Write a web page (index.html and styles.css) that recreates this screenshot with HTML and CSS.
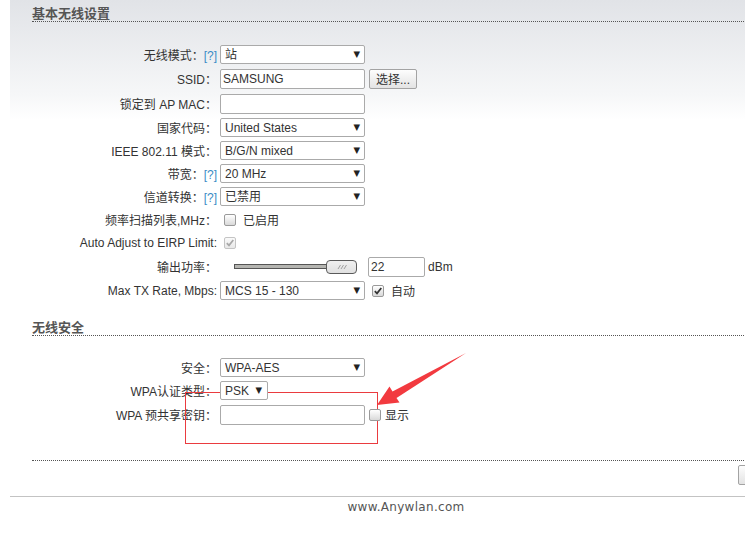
FILE: index.html
```html
<!DOCTYPE html>
<html>
<head>
<meta charset="utf-8">
<title>无线设置</title>
<link rel="stylesheet" href="styles.css">
</head>
<body>
<div class="page">
  <div class="panel">
    <!-- 基本无线设置 -->
    <div class="sec-title">基本无线设置</div>
    <div class="form">
      <div class="row"><label class="lbl">无线模式：<a class="help">[?]</a></label><span class="sel"><select><option>站</option></select></span></div>
      <div class="row tall"><label class="lbl">SSID：</label><input class="txt" type="text" value="SAMSUNG"><button class="btn">选择...</button></div>
      <div class="row tall"><label class="lbl">锁定到 AP MAC：</label><input class="txt" type="text" value=""></div>
      <div class="row"><label class="lbl">国家代码：</label><span class="sel"><select><option>United States</option></select></span></div>
      <div class="row"><label class="lbl">IEEE 802.11 模式：</label><span class="sel"><select><option>B/G/N mixed</option></select></span></div>
      <div class="row"><label class="lbl">带宽：<a class="help">[?]</a></label><span class="sel"><select><option>20 MHz</option></select></span></div>
      <div class="row"><label class="lbl">信道转换：<a class="help">[?]</a></label><span class="sel"><select><option>已禁用</option></select></span></div>
      <div class="row"><label class="lbl">频率扫描列表,MHz：</label><span class="cb"></span><span class="cb-text">已启用</span></div>
      <div class="row"><label class="lbl">Auto Adjust to EIRP Limit:</label><span class="cb on dis"><svg width="10" height="10" viewBox="0 0 10 10"><path d="M1.8 5.2 L4 7.4 L8.3 2" fill="none" stroke="#a8a8a8" stroke-width="1.7"/></svg></span></div>
      <div class="row tall"><label class="lbl">输出功率：</label>
        <span class="slider"><span class="track"></span><span class="knob"><svg width="29" height="12" viewBox="0 0 29 12"><path d="M11 8 L13.5 4 M14 8 L16.5 4 M17 8 L19.5 4" stroke="#a0a0a0" stroke-width="1"/></svg></span></span>
        <input class="txt short" type="text" value="22"><span class="unit">dBm</span>
      </div>
      <div class="row"><label class="lbl">Max TX Rate, Mbps:</label><span class="sel"><select><option>MCS 15 - 130</option></select></span><span class="cb on auto"><svg width="10" height="10" viewBox="0 0 10 10"><path d="M1.8 5.2 L4 7.4 L8.3 2" fill="none" stroke="#333" stroke-width="1.7"/></svg></span><span class="cb-text">自动</span></div>
    </div>

    <!-- 无线安全 -->
    <div class="sec-title second">无线安全</div>
    <div class="form sec2">
      <div class="row"><label class="lbl">安全：</label><span class="sel"><select><option>WPA-AES</option></select></span></div>
      <div class="row"><label class="lbl">WPA认证类型：</label><span class="sel small"><select><option>PSK</option></select></span></div>
      <div class="row tall"><label class="lbl">WPA 预共享密钥：</label><input class="txt" type="text" value=""><span class="cb show"></span><span class="cb-text near">显示</span></div>
    </div>

    <div class="foot-bar"><button class="btn save"></button></div>
  </div>
  <div class="footer">www.Anywlan.com</div>

  <svg class="marks" width="745" height="552" viewBox="0 0 745 552">
    <rect x="185.5" y="392.5" width="192" height="51" fill="none" stroke="#ea3b3f" stroke-width="1"/>
    <polygon points="466,353 392.5,391.5 389.5,386.5 377,405 399.5,402.5 396.5,398" fill="#f23a3f"/>
  </svg>
</div>
</body>
</html>
```
FILE: styles.css
```css
html, body{margin:0;padding:0;background:#fff;overflow:hidden;}
.page{
	position:relative;
	width:802px;
	font:12px "Liberation Sans","Noto Sans CJK SC",sans-serif;
	color:#333;
}
.panel{
	margin-left:10px;
	padding-top:7px;
	background:#fff linear-gradient(to bottom,#e1e3e7 0,#f6f7f8 95px,#fff 120px) no-repeat;
	background-size:100% 120px;
}
.sec-title{
	margin-left:22px;
	font-size:13px;
	font-weight:bold;
	line-height:14px;
	color:#555;
	border-bottom:1px dotted #555;
}
.sec-title.second{margin-top:19px;}
.form{margin-top:21px;}
.form.sec2{margin-top:20px;}

.row{display:flex;align-items:center;height:23px;}
.row.tall{height:25px;}
.lbl{
	flex:none;
	width:207px;
	margin-right:3px;
	text-align:right;
	white-space:nowrap;
}
.help{color:#3a8cc6;}

.txt{
	box-sizing:border-box;
	width:145px;height:20px;
	margin:0;padding:0 2px;
	border:1px solid #aaa;border-radius:2px;
	background:#fff;
	font:inherit;color:#333;
	outline:none;
}
.txt.short{width:57px;margin-left:11px;}
.unit{margin-left:3px;}

.sel{position:relative;display:inline-block;z-index:2;}
.sel select{
	-webkit-appearance:none;appearance:none;
	box-sizing:border-box;
	width:145px;height:19px;
	margin:0;padding:0 4px;
	border:1px solid #aaa;border-radius:2px;
	background:#fff;
	font:inherit;color:#333;
	outline:none;
}
.sel.small select{width:48px;}
.sel::after{
	content:"▼";
	position:absolute;right:5px;top:4px;
	font:8.5px/10px "DejaVu Sans",sans-serif;color:#222;
	pointer-events:none;
}
.sel.small::after{right:6px;}

.btn{
	box-sizing:border-box;
	height:20px;margin:0 0 0 4px;padding:0 6px;
	border:1px solid #a3a3a3;border-radius:2px;
	background:linear-gradient(#fdfdfd,#e3e3e3);
	font:inherit;color:#333;
}

.cb{
	position:relative;z-index:2;
	display:inline-flex;align-items:center;justify-content:center;
	box-sizing:border-box;
	width:12px;height:12px;
	margin-left:4px;
	border:1px solid #9a9a9a;border-radius:2px;
	background:linear-gradient(#fff,#d9d9d9);
}
.cb.dis{border-color:#c4c4c4;background:linear-gradient(#fafafa,#e8e8e8);}
.cb.auto{margin-left:7px;}
.cb.show{margin-left:4px;}
.cb-text{margin-left:7px;}
.cb-text.near{margin-left:4px;}

.slider{display:flex;align-items:center;margin-left:14px;}
.track{
	box-sizing:border-box;
	width:93px;height:5px;
	border:1px solid #555;
	background:#b5b5b1;
}
.knob{
	box-sizing:border-box;
	display:flex;
	width:31px;height:14px;margin-left:-1px;
	border:1px solid #5a5a5a;border-radius:4px;
	background:linear-gradient(#f0f0f0,#e0e0e0);
}

.foot-bar{
	margin:33px 0 0 22px;
	padding:4px 0 11px;
	border-top:1px dotted #555;
	text-align:right;
}
.btn.save{width:50px;margin-right:14px;vertical-align:top;}

.footer{
	margin-left:10px;
	padding-top:3px;
	border-top:1px solid #c3c3c3;
	text-align:center;
	font:12px "DejaVu Sans",sans-serif;
	letter-spacing:.3px;
	line-height:14px;
	color:#555;
}
.marks{position:absolute;left:0;top:0;z-index:1;pointer-events:none;}
```
